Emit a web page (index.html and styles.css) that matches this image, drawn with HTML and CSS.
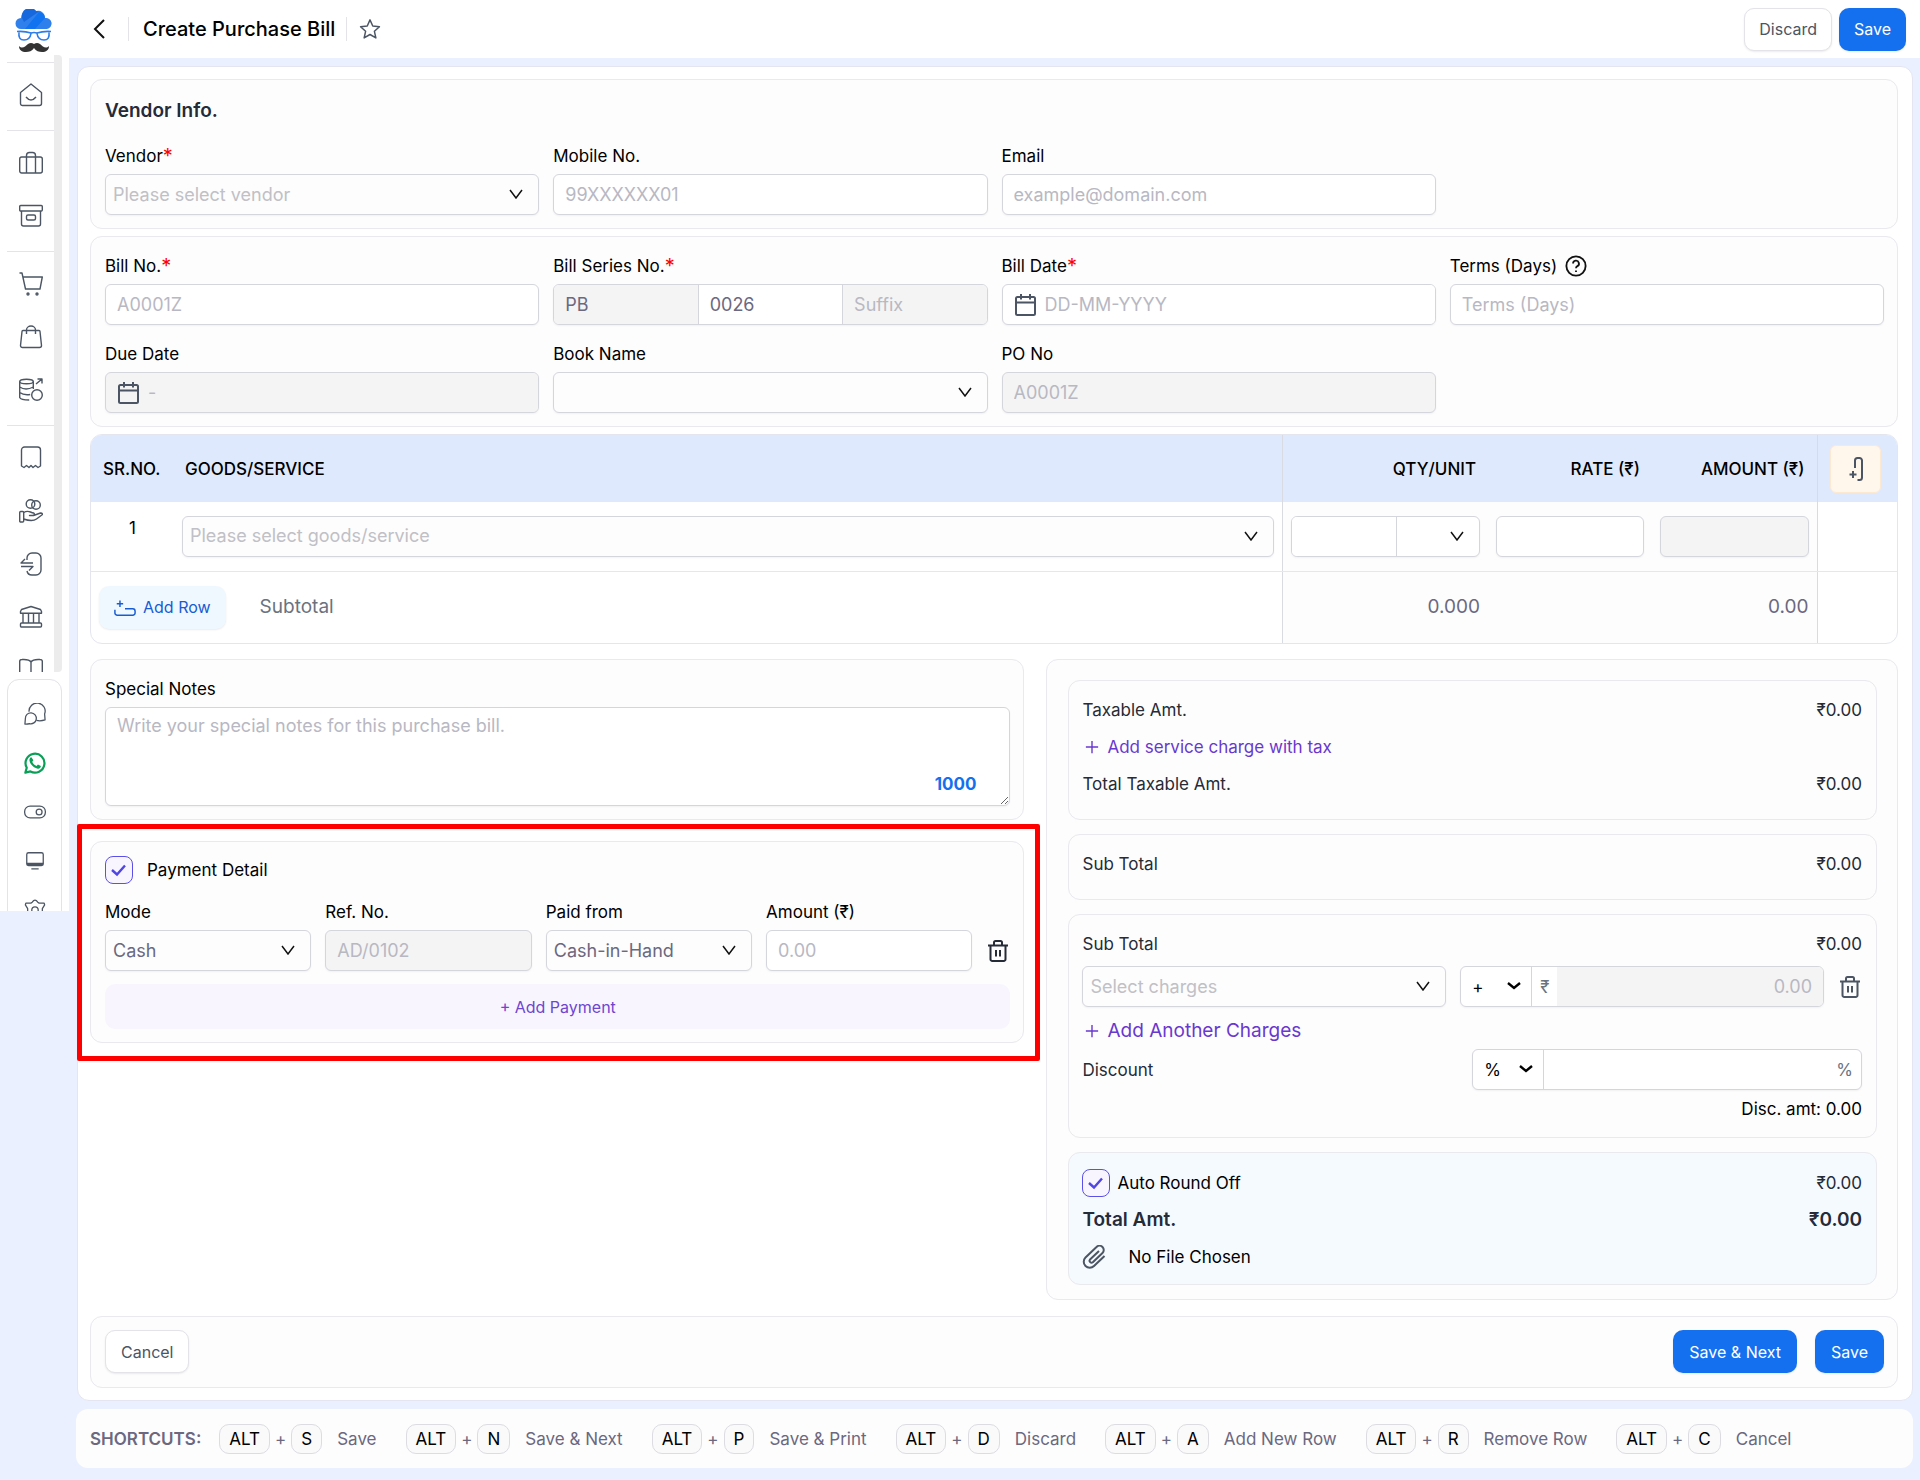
FILE: index.html
```
<!DOCTYPE html>
<html lang="en">
  <head>
    <meta charset="UTF-8" />
    <meta name="viewport" content="width=device-width, initial-scale=1.0" />
    <title>Create Purchase Bill</title>
    <link rel="stylesheet" href="styles.css" />
  </head>

  <body>
    <!-- shared icons -->
    <svg class="symbols" aria-hidden="true">
      <symbol id="icon-trash" viewBox="0 0 24 24">
        <path d="M2 6.500h20M8 6V3.500A1.500 1.500 0 0 1 9.500 2h5A1.500 1.500 0 0 1 16 3.500V6M4.500 6.500V20A1.800 1.800 0 0 0 6.300 22h11.400a1.800 1.800 0 0 0 1.800-2V6.500M10 11v6.500M14 11v6.500" />
      </symbol>
      <symbol id="icon-calendar" viewBox="0 0 24 24">
        <path d="M3.500 4h16A1.500 1.500 0 0 1 21 5.500v15a1.500 1.500 0 0 1-1.500 1.500h-16A1.500 1.500 0 0 1 2 20.500v-15A1.500 1.500 0 0 1 3.500 4zM2 9.500h19M7 1v5.500M16 1v5.500" />
      </symbol>
      <symbol id="icon-plus" viewBox="0 0 16 16">
        <path d="M8 1v14M1 8h14" />
      </symbol>
    </svg>

    <!-- sidebar -->
    <aside class="sidebar">
      <a href="#" class="logo" aria-label="Home page">
        <svg width="38" height="44" viewBox="0 0 38 44">
          <path fill="#2f80ed" d="M6 20a5.500 5.500 0 0 1 0-11 8 8 0 0 1 2-5 8 8 0 0 1 13-2 7 7 0 0 1 9 7 5.500 5.500 0 0 1 2 11z" />
          <path fill="#1668dc" d="M7 9a8 8 0 0 1 14-7l3 .5L9 13z" />
          <path fill="#1273f0" d="M10 20 24 3a7 7 0 0 1 6 6L20 20z" />
          <path fill="none" stroke="#2b7de9" stroke-width="1.600" d="M2 22.500q8-.5 14 1.500 3-1 6 0 6-2 14-1.500M4 23.500q-1 7.500 5 7.500 6 0 7-6.500M34 23.500q1 7.500-5 7.500-6 0-7-6.500" />
          <path fill="#333" d="M19 35q-3-2-6 0c-3 3-6 5-9 2 0 4 3 6 7 6 3 0 6-1 8-4 2 3 5 4 8 4 4 0 7-2 7-6-3 3-6 1-9-2q-3-2-6 0z" />
        </svg>
      </a>

      <nav class="menu">
        <div class="menu-group">
          <a href="#" aria-label="Dashboard"><svg class="icon" viewBox="0 0 24 24"><path d="M1.500 9.500 12 1l10.500 8.500v11a2 2 0 0 1-2 2h-17a2 2 0 0 1-2-2zM7 14q5 6 10 0" /></svg></a>
        </div>
        <div class="menu-group">
          <a href="#" aria-label="Contacts"><svg class="icon" viewBox="0 0 24 24"><rect x="0.700" y="6" width="22.600" height="16" rx="2" /><path d="M7.500 22V4.500A3 3 0 0 1 10.500 1.500h3a3 3 0 0 1 3 3V22" /></svg></a>
          <a href="#" aria-label="Products"><svg class="icon" viewBox="0 0 24 24"><rect x="0.700" y="1.500" width="22.600" height="5.500" rx="1" /><path d="M2.500 7v13a2 2 0 0 0 2 2h15a2 2 0 0 0 2-2V7" /><rect x="7.500" y="11" width="9" height="5" rx="1.500" /></svg></a>
        </div>
        <div class="menu-group">
          <a href="#" aria-label="Sales"><svg class="icon" viewBox="0 0 24 24"><path d="M0.500 1h2.500l3.500 16h14.500l2.300-12H4" /><circle cx="9" cy="22" r="1" /><circle cx="18" cy="22" r="1" /></svg></a>
          <a href="#" aria-label="Purchase"><svg class="icon" viewBox="0 0 24 24"><path d="M4 5.500h16a1 1 0 0 1 1 1l1.500 14a2 2 0 0 1-2 2h-17a2 2 0 0 1-2-2L3 6.500a1 1 0 0 1 1-1zM7.500 9V5a4.500 4 0 0 1 9 0v4" /></svg></a>
          <a href="#" aria-label="Quotation"><svg class="icon" viewBox="0 0 24 24"><ellipse cx="7.500" cy="3.500" rx="6.800" ry="2.300" /><path d="M.7 3.500v16q1 2.500 9.500 2.500M14.300 3.500V11M.7 9q6 4 13.600 0M.7 14.500q4 3 10.500 2M17 6l6-5M18.500 1H23v4.500" /><circle cx="18" cy="17" r="5.300" /></svg></a>
        </div>
        <div class="menu-group">
          <a href="#" aria-label="Expenses"><svg class="icon" viewBox="0 0 24 24"><path d="M2.500 20V4a3 3 0 0 1 3-3h13a3 3 0 0 1 3 3v16l-2.500 1.500-2.500-2-2.500 2-2-2-2 2-2.500-2-2.500 2z" /></svg></a>
          <a href="#" aria-label="Income"><svg class="icon" viewBox="0 0 24 24"><circle cx="11.500" cy="5" r="4.300" /><circle cx="17" cy="6" r="4.300" /><rect x="0.700" y="12.500" width="4" height="10.500" rx="1" /><path d="M4.700 13.500c5-3 6 0 10 .500q2 2-1 2.500H10.500h4l7-2.500q2 0 2 1.500l-6 4.500q-4 3-13 0" /></svg></a>
          <a href="#" aria-label="Payments"><svg class="icon" viewBox="0 0 24 24"><path d="M8 8V6a5 5 0 0 1 5-5h4a5 5 0 0 1 5 5v12a5 5 0 0 1-5 5h-4a5 5 0 0 1-5-4M14 11H2l4-4M2 14.500h12l-4 4" /></svg></a>
          <a href="#" aria-label="Bank"><svg class="icon" viewBox="0 0 24 24"><path d="m1.500 6.500 1-2L12 1.500l9.500 3 1 2v1.700h-21zM4 8.500V18M9.500 8.500V18M14.500 8.500V18M20 8.500V18" /><rect x="1.500" y="18" width="21" height="4" rx="1" /></svg></a>
          <a href="#" aria-label="Reports"><svg class="icon" viewBox="0 0 24 24"><path d="M12 22V4q-2-3-9-2.500-2.300 0-2.300 2V20h6.800q4 0 4.500 2 .5-2 4.500-2h6.800V3.500q0-2-2.300-2Q14 1 12 4" /></svg></a>
        </div>
      </nav>

      <nav class="menu-bottom">
        <a href="#" aria-label="Chat"><svg class="icon" viewBox="0 0 24 24"><path d="M5.500 9.500a8.800 8.800 0 1 1 17 2.500l.5 6.500q-5 1.500-9.500.5" /><path d="M1 23l.5-6a6 6 0 1 1 4.500 5.500q-2 .7-5 .5z" /></svg></a>
        <a href="#" aria-label="WhatsApp"><svg class="icon icon-whatsapp" viewBox="0 0 24 24"><path class="ring" d="M1.500 22.500 3 17.200A10.300 10.300 0 1 1 7 21.200z" /><path class="phone" d="M8 5.800c-1.600.4-2.300 2-2 3.700.7 4 4.800 8 9 8.700 1.800.2 3.400-1 3.400-2.900l-3.200-1.600-1.500 1.500c-2-.6-4-2.600-4.700-4.500L10.300 9z" /></svg></a>
        <a href="#" aria-label="Toggle"><svg class="icon" viewBox="0 0 24 24"><rect x="0.700" y="5.500" width="22.600" height="13" rx="6" /><circle cx="16.500" cy="12" r="3.200" /></svg></a>
        <a href="#" aria-label="Screen"><svg class="icon" viewBox="0 0 24 24"><rect x="3" y="3" width="18" height="14" rx="2" /><path d="M3 14.500h18M3 15.800h18M8 20.500h8" /></svg></a>
        <a href="#" aria-label="Settings"><svg class="icon" viewBox="0 0 24 24"><path d="M9 3.500Q12-1 15 3.500l1.500 1L22 4.500l.500 2-2.500 4v3l2.500 4-.500 2h-5.500L12 23l-4.500-3.500H2l-.500-2 2.500-4v-3L1.500 6.500l.500-2h5.500z" /><circle cx="12" cy="12" r="3.500" /></svg></a>
      </nav>
    </aside>

    <div class="page">
      <!-- header -->
      <header class="header">
        <button type="button" class="icon-btn" aria-label="Back">
          <svg width="24" height="24" viewBox="0 0 24 24"><path d="M16 3 7 12l9 9" fill="none" stroke="#111" stroke-width="2" /></svg>
        </button>
        <h1>Create Purchase Bill</h1>
        <button type="button" class="icon-btn star" aria-label="Add to favourites">
          <svg width="22" height="22" viewBox="0 0 24 24"><path d="m12 2 3 6.800 7.300.7-5.500 5 1.600 7.300L12 18l-6.400 3.800 1.600-7.300-5.500-5L9 8.800z" fill="none" stroke="#4b5563" stroke-width="1.600" stroke-linejoin="round" /></svg>
        </button>
        <div class="header-actions">
          <button type="button" class="btn btn-light">Discard</button>
          <button type="button" class="btn btn-primary">Save</button>
        </div>
      </header>

      <form class="panel">
        <!-- vendor -->
        <section class="card">
          <h2>Vendor Info.</h2>
          <div class="fields">
            <div class="field">
              <label for="vendor">Vendor<span class="req">*</span></label>
              <select id="vendor" class="control empty"><option>Please select vendor</option></select>
            </div>
            <div class="field">
              <label for="mobile">Mobile No.</label>
              <input type="text" id="mobile" class="control" placeholder="99XXXXXX01" />
            </div>
            <div class="field">
              <label for="email">Email</label>
              <input type="text" id="email" class="control" placeholder="example@domain.com" />
            </div>
          </div>
        </section>

        <!-- bill details -->
        <section class="card">
          <div class="fields">
            <div class="field">
              <label for="billNo">Bill No.<span class="req">*</span></label>
              <input type="text" id="billNo" class="control" placeholder="A0001Z" />
            </div>
            <div class="field">
              <label for="seriesNo">Bill Series No.<span class="req">*</span></label>
              <div class="group series">
                <input type="text" value="PB" aria-label="Prefix" disabled />
                <input type="text" id="seriesNo" value="0026" />
                <input type="text" placeholder="Suffix" aria-label="Suffix" disabled />
              </div>
            </div>
            <div class="field">
              <label for="billDate">Bill Date<span class="req">*</span></label>
              <div class="group date">
                <svg class="icon icon-bold"><use href="#icon-calendar" /></svg>
                <input type="text" id="billDate" placeholder="DD-MM-YYYY" />
              </div>
            </div>
            <div class="field">
              <label for="terms">Terms (Days)
                <svg class="help" viewBox="0 0 24 24"><circle cx="12" cy="12" r="10.500" /><path d="M8.800 9.300a3.200 3.200 0 1 1 4.700 2.900q-1.500.8-1.500 2.300M12 16.800v1.700" /></svg>
              </label>
              <input type="text" id="terms" class="control" placeholder="Terms (Days)" />
            </div>
            <div class="field">
              <label for="dueDate">Due Date</label>
              <div class="group date disabled">
                <svg class="icon icon-bold"><use href="#icon-calendar" /></svg>
                <input type="text" id="dueDate" placeholder="-" disabled />
              </div>
            </div>
            <div class="field">
              <label for="bookName">Book Name</label>
              <select id="bookName" class="control"><option></option></select>
            </div>
            <div class="field">
              <label for="poNo">PO No</label>
              <input type="text" id="poNo" class="control" placeholder="A0001Z" disabled />
            </div>
          </div>
        </section>

        <!-- items -->
        <div class="table-wrap">
          <table class="items">
            <colgroup>
              <col class="col-sr" />
              <col />
              <col class="col-qty" />
              <col class="col-rate" />
              <col class="col-amount" />
              <col class="col-action" />
            </colgroup>
            <thead>
              <tr>
                <th class="sr">SR.NO.</th>
                <th class="goods">GOODS/SERVICE</th>
                <th class="num line">QTY/UNIT</th>
                <th class="num">RATE (₹)</th>
                <th class="num">AMOUNT (₹)</th>
                <th class="line action">
                  <button type="button" class="btn-column" aria-label="Add column">
                    <svg class="icon icon-bold" viewBox="0 0 24 24"><path d="M12 11V3.500A2.500 2.500 0 0 1 14.500 1h2A2.500 2.500 0 0 1 19 3.500v17a2.500 2.500 0 0 1-2.500 2.500H14.500M6.500 17.500h7M10 14v7" /></svg>
                  </button>
                </th>
              </tr>
            </thead>
            <tbody>
              <tr>
                <td class="sr-value">1</td>
                <td>
                  <select class="control empty" aria-label="Goods or service"><option>Please select goods/service</option></select>
                </td>
                <td class="line shade">
                  <div class="group qty">
                    <input type="text" aria-label="Quantity" />
                    <select aria-label="Unit"><option></option></select>
                  </div>
                </td>
                <td class="shade"><input type="text" class="control" aria-label="Rate" /></td>
                <td class="shade"><input type="text" class="control" aria-label="Amount" disabled /></td>
                <td class="line"></td>
              </tr>
            </tbody>
            <tfoot>
              <tr>
                <td colspan="2">
                  <div class="subtotal">
                    <button type="button" class="btn btn-row">
                      <svg width="22" height="22" viewBox="0 0 24 24"><path d="M1 15v3.500A2.500 2.500 0 0 0 3.500 21h17a2.500 2.500 0 0 0 2.500-2.500v-2a2.500 2.500 0 0 0-2.500-2.500H12M3 8.500h7M6.500 5v7" /></svg>
                      Add Row
                    </button>
                    <span>Subtotal</span>
                  </div>
                </td>
                <td class="total line shade">0.000</td>
                <td class="shade"></td>
                <td class="total shade">0.00</td>
                <td class="line"></td>
              </tr>
            </tfoot>
          </table>
        </div>

        <div class="columns">
          <div class="left">
            <section class="card notes">
              <label for="notes">Special Notes</label>
              <div class="notes-box">
                <textarea id="notes" class="control" placeholder="Write your special notes for this purchase bill."></textarea>
                <span class="counter">1000</span>
              </div>
            </section>

            <section class="card payment">
              <label class="check">
                <input type="checkbox" checked />
                Payment Detail
              </label>
              <div class="payment-row">
                <div class="field">
                  <label for="mode">Mode</label>
                  <select id="mode" class="control"><option>Cash</option></select>
                </div>
                <div class="field">
                  <label for="refNo">Ref. No.</label>
                  <input type="text" id="refNo" class="control" placeholder="AD/0102" disabled />
                </div>
                <div class="field">
                  <label for="paidFrom">Paid from</label>
                  <select id="paidFrom" class="control"><option>Cash-in-Hand</option></select>
                </div>
                <div class="field">
                  <label for="payAmount">Amount (₹)</label>
                  <input type="text" id="payAmount" class="control" placeholder="0.00" />
                </div>
                <button type="button" class="icon-btn trash" aria-label="Delete payment">
                  <svg class="icon icon-bold"><use href="#icon-trash" /></svg>
                </button>
              </div>
              <button type="button" class="btn-payment">+ Add Payment</button>
            </section>
          </div>

          <div class="card summary">
            <section class="card box">
              <div class="row"><span>Taxable Amt.</span><span>₹0.00</span></div>
              <div class="row">
                <a href="#" class="add-link"><svg><use href="#icon-plus" /></svg>Add service charge with tax</a>
              </div>
              <div class="row"><span>Total Taxable Amt.</span><span>₹0.00</span></div>
            </section>

            <section class="card box">
              <div class="row"><span>Sub Total</span><span>₹0.00</span></div>
            </section>

            <section class="card box charges">
              <div class="row"><span>Sub Total</span><span>₹0.00</span></div>
              <div class="charge-row">
                <select class="control empty" aria-label="Charges"><option>Select charges</option></select>
                <div class="group charge-amount">
                  <select class="sign" aria-label="Sign"><option>+</option></select>
                  <span class="unit">₹</span>
                  <input type="text" placeholder="0.00" aria-label="Charge amount" disabled />
                </div>
                <button type="button" class="icon-btn" aria-label="Delete charge">
                  <svg class="icon icon-bold"><use href="#icon-trash" /></svg>
                </button>
              </div>
              <div class="row">
                <a href="#" class="add-link add-link-large"><svg><use href="#icon-plus" /></svg>Add Another Charges</a>
              </div>
              <div class="discount-row">
                <label for="discount">Discount</label>
                <div class="group discount">
                  <select class="sign" aria-label="Discount type"><option>%</option></select>
                  <input type="text" id="discount" />
                  <span class="unit">%</span>
                </div>
              </div>
              <div class="row disc-amt">Disc. amt: 0.00</div>
            </section>

            <section class="card box final">
              <div class="row">
                <label class="check"><input type="checkbox" checked />Auto Round Off</label>
                <span>₹0.00</span>
              </div>
              <div class="row grand"><span>Total Amt.</span><span>₹0.00</span></div>
              <div class="row file">
                <svg class="icon icon-bold" viewBox="0 0 24 24"><path d="m17 6-9 8.500a2 2 0 0 0 2.800 2.800L20.500 8a4.200 4.200 0 0 0-6-6L3.500 12.500a6 6 0 0 0 8.500 8.500l10.500-10" /></svg>
                <span>No File Chosen</span>
              </div>
            </section>
          </div>
        </div>

        <div class="card actions">
          <button type="button" class="btn btn-light">Cancel</button>
          <div>
            <button type="button" class="btn btn-primary">Save &amp; Next</button>
            <button type="submit" class="btn btn-primary">Save</button>
          </div>
        </div>
      </form>

      <!-- shortcuts -->
      <footer class="shortcuts">
        <strong>SHORTCUTS:</strong>
        <div class="shortcut"><kbd>ALT</kbd>+<kbd>S</kbd><span>Save</span></div>
        <div class="shortcut"><kbd>ALT</kbd>+<kbd>N</kbd><span>Save &amp; Next</span></div>
        <div class="shortcut"><kbd>ALT</kbd>+<kbd>P</kbd><span>Save &amp; Print</span></div>
        <div class="shortcut"><kbd>ALT</kbd>+<kbd>D</kbd><span>Discard</span></div>
        <div class="shortcut"><kbd>ALT</kbd>+<kbd>A</kbd><span>Add New Row</span></div>
        <div class="shortcut"><kbd>ALT</kbd>+<kbd>R</kbd><span>Remove Row</span></div>
        <div class="shortcut"><kbd>ALT</kbd>+<kbd>C</kbd><span>Cancel</span></div>
      </footer>
    </div>
  </body>
</html>
```

FILE: styles.css
```
* {
  box-sizing: border-box;
}

body {
  margin: 0;
  display: flex;
  align-items: flex-start;
  font-family: Inter, "Liberation Sans", sans-serif;
  font-size: 17px;
  line-height: 24px;
  color: #000;
  background-color: #eaf0ff;
}

h1,
h2 {
  margin: 0;
}

a {
  text-decoration: none;
}

input,
select,
textarea,
button {
  font: inherit;
  margin: 0;
}

button {
  cursor: pointer;
}

.symbols {
  position: absolute;
  width: 0;
  height: 0;
}

.icon {
  display: block;
  width: 24px;
  height: 24px;
  fill: none;
  stroke: #4b5563;
  stroke-width: 1.4;
  stroke-linejoin: round;
}

.icon-bold {
  stroke-width: 2;
}

/* sidebar */

.sidebar {
  flex: none;
  width: 69px;
  height: 911px;
  overflow: hidden;
  background-color: #fff;
}

.logo {
  display: block;
  height: 55px;
  padding: 9px 0 0 15px;
}

.menu {
  height: 617px;
  margin-right: 7px;
  padding-left: 7px;
  overflow: hidden;
  border-right: 8px solid #ececec;
  border-radius: 4px;
}

.menu-group {
  padding: 5px 0 9px;
  border-top: 1px solid #e3e3e8;
}

.menu-group:first-child {
  margin-top: 7px;
}

.menu-group a {
  display: flex;
  align-items: center;
  justify-content: center;
  height: 53px;
}

.menu-bottom {
  height: 260px;
  margin: 7px 7px 0;
  padding-top: 9px;
  border: 1px solid #e3e3e8;
  border-radius: 12px;
}

.menu-bottom a {
  display: flex;
  align-items: center;
  justify-content: center;
  height: 49px;
}

.menu-bottom .icon {
  width: 22px;
  height: 22px;
}

.icon-whatsapp .ring {
  stroke: #0a9f56;
  stroke-width: 2.4;
}

.icon-whatsapp .phone {
  fill: #0a9f56;
  stroke: none;
}

/* header */

.page {
  flex: 1;
  min-width: 0;
}

.header {
  display: flex;
  align-items: center;
  height: 58px;
  padding: 0 14px 0 19px;
  background-color: #fff;
}

.header h1 {
  margin-left: 16px;
  padding: 0 11px 0 14px;
  border-left: 1px solid #e3e3e8;
  border-right: 1px solid #e3e3e8;
  font-size: 20px;
  font-weight: 500;
}

.icon-btn {
  display: flex;
  padding: 0;
  border: none;
  background: none;
}

.star {
  margin-left: 12px;
}

.header-actions {
  display: flex;
  gap: 7px;
  margin-left: auto;
}

.btn {
  height: 43px;
  padding: 0 14px;
  border: 1px solid transparent;
  border-radius: 10px;
  box-shadow: 0 1px 2px rgba(0, 0, 0, 0.08);
  font-size: 16px;
}

.btn-light {
  border-color: #e3e3e8;
  background-color: #fff;
  color: #4b5563;
}

.btn-primary {
  background-color: #1570ef;
  color: #fff;
}

/* cards */

.panel {
  display: flex;
  flex-direction: column;
  gap: 7px;
  margin: 8px 7px 8px 8px;
  padding: 12px 14px 12px 12px;
  border: 1px solid #e3e6f0;
  border-radius: 12px;
  background-color: #fff;
}

.card {
  padding: 17px 13px 13px 14px;
  border: 1px solid #e9e9ee;
  border-radius: 12px;
  background-color: #fdfdfd;
}

.card h2 {
  margin-bottom: 20px;
  font-size: 19px;
  font-weight: 600;
  line-height: 27px;
  color: #252b37;
}

.fields {
  display: grid;
  grid-template-columns: repeat(4, 1fr);
  gap: 17px 14px;
}

.field {
  display: flex;
  flex-direction: column;
  gap: 6px;
  min-width: 0;
}

.field label {
  display: flex;
  align-items: center;
  height: 24px;
}

.req {
  color: #f00;
  font-size: 20px;
}

.help {
  width: 22px;
  height: 22px;
  margin-left: 8px;
  fill: none;
  stroke: #111;
  stroke-width: 2;
}

.control,
.group {
  width: 100%;
  height: 41px;
  border: 1px solid #d5d5dd;
  border-radius: 6px;
  background-color: #fff;
  box-shadow: 0 1px 2px rgba(0, 0, 0, 0.05);
}

.control,
.group input,
.group select {
  padding: 0 11px;
  font-size: 18px;
  color: #6b6880;
}

::placeholder {
  color: #b8b8c3;
  opacity: 1;
}

.control:disabled,
.group input:disabled,
.disabled {
  background-color: #f4f4f4;
}

select {
  appearance: none;
  background: transparent url("data:image/svg+xml,%3Csvg xmlns='http://www.w3.org/2000/svg' width='14' height='11' fill='none' stroke='%23111' stroke-width='1.500'%3E%3Cpath d='M1 1l6 8 6-8'/%3E%3C/svg%3E") no-repeat right 15px center;
}

select.control {
  padding-left: 7px;
  background-color: #fdfdfd;
}

select.empty {
  color: #c0c0c6;
}

.group {
  display: flex;
  align-items: center;
  overflow: hidden;
}

.group input,
.group select {
  flex: 1;
  min-width: 0;
  height: 100%;
  border: none;
}

.series input + input {
  border-left: 1px solid #d5d5dd;
}

.date {
  padding-left: 11px;
}

.date input {
  padding-left: 7px;
}

/* items table */

.table-wrap {
  overflow: hidden;
  border: 1px solid #e3e6ee;
  border-radius: 12px;
}

.items {
  width: 100%;
  table-layout: fixed;
  border-collapse: collapse;
}

.col-sr {
  width: 83px;
}

.col-qty {
  width: 206px;
}

.col-rate {
  width: 164px;
}

.col-amount {
  width: 165px;
}

.col-action {
  width: 80px;
}

.items th {
  height: 67px;
  padding: 0 12px;
  background-color: #dfe9fd;
  font-weight: 500;
  text-align: left;
}

.items th.goods {
  padding-left: 11px;
}

.items th.num {
  text-align: right;
}

.items .line {
  border-left: 1px solid #d9dbe2;
}

.items td {
  padding: 0 8px;
}

.items tbody td {
  height: 69px;
  border-bottom: 1px solid #e6e6ec;
}

.items tfoot td {
  height: 72px;
}

.items .sr-value {
  padding-bottom: 16px;
  text-align: center;
}

.shade {
  background-color: #fdfdfd;
}

.items .qty select {
  flex: 0 0 83px;
  border-left: 1px solid #d5d5dd;
}

.items .total {
  font-size: 19px;
  color: #6b6880;
  text-align: right;
}

.btn-column {
  display: flex;
  align-items: center;
  justify-content: center;
  width: 51px;
  height: 48px;
  border: 1px solid #fde8d2;
  border-radius: 6px;
  background-color: #fff6ec;
}

.subtotal {
  display: flex;
  align-items: center;
  gap: 34px;
  font-size: 19px;
  color: #6b7280;
}

.btn-row {
  display: flex;
  align-items: center;
  gap: 7px;
  background-color: #f0f8ff;
  color: #175cd3;
}

.btn-row svg {
  fill: none;
  stroke: #175cd3;
  stroke-width: 1.6;
}

/* notes and payment */

.columns {
  display: grid;
  grid-template-columns: 935fr 852fr;
  align-items: start;
  gap: 22px;
  margin: 8px 0 9px;
}

.left {
  display: flex;
  flex-direction: column;
  gap: 21px;
}

.notes-box {
  position: relative;
  margin-top: 6px;
}

.notes label {
  display: block;
}

.notes textarea {
  display: block;
  height: 99px;
  padding: 6px 11px;
}

.counter {
  position: absolute;
  right: 34px;
  bottom: 10px;
  color: #1570ef;
  font-weight: 700;
}

/* red frame round the payment block */
.payment {
  position: relative;
  padding-top: 14px;
}

.payment::after {
  content: "";
  position: absolute;
  inset: -18px -17px -19px -14px;
  border: 5px solid #f00;
  border-radius: 2px;
  pointer-events: none;
}

.check {
  display: flex;
  align-items: center;
  gap: 14px;
}

.check input {
  appearance: none;
  width: 28px;
  height: 28px;
  border: 1px solid #5b50e8;
  border-radius: 8px;
  background-color: #f8f5ff;
}

.check input:checked {
  background-image: url("data:image/svg+xml,%3Csvg xmlns='http://www.w3.org/2000/svg' width='16' height='14' fill='none' stroke='%234f46e5' stroke-width='2.400'%3E%3Cpath d='M1 7l5 4.500 8-9'/%3E%3C/svg%3E");
  background-repeat: no-repeat;
  background-position: center;
}

.payment-row {
  display: grid;
  grid-template-columns: repeat(4, 1fr) 24px;
  align-items: end;
  gap: 14px;
  margin: 16px 0 13px;
}

.trash {
  align-items: center;
  height: 41px;
}

.trash .icon {
  stroke: #252b37;
}

.btn-payment {
  width: 100%;
  height: 45px;
  border: none;
  border-radius: 10px;
  background-color: #f8f5ff;
  color: #6e46d0;
  font-size: 16px;
}

/* summary */

.summary {
  display: flex;
  flex-direction: column;
  gap: 14px;
  padding: 20px 20px 14px 21px;
}

.box {
  padding: 10px 14px 17px 13px;
}

.row {
  display: flex;
  align-items: center;
  justify-content: space-between;
  height: 37px;
  color: #252b37;
}

.add-link {
  display: flex;
  align-items: center;
  gap: 8px;
  color: #6938cf;
}

.add-link svg {
  width: 14px;
  height: 14px;
  margin-left: 3px;
  stroke: currentColor;
  stroke-width: 1.6;
}

.add-link-large {
  font-size: 19px;
}

.charges {
  padding-bottom: 10px;
}

.charge-row {
  display: grid;
  grid-template-columns: 1fr 1fr 24px;
  align-items: center;
  gap: 14px;
  margin: 4px 0 5px;
}

.group .sign {
  flex: 0 0 71px;
  padding-left: 11px;
  border-right: 1px solid #d5d5dd;
  background-image: url("data:image/svg+xml,%3Csvg xmlns='http://www.w3.org/2000/svg' width='14' height='9' fill='none' stroke='%23000' stroke-width='2.400'%3E%3Cpath d='M1 1l6 5 6-5'/%3E%3C/svg%3E");
  background-position: right 10px center;
  color: #000;
  font-size: 17px;
}

.unit {
  padding: 0 8px;
  color: #6b7280;
}

.charge-amount input {
  text-align: right;
}

.discount-row {
  display: grid;
  grid-template-columns: 1fr 1fr;
  align-items: center;
  color: #252b37;
}

.disc-amt {
  justify-content: flex-end;
  color: #000;
}

.final {
  padding: 11px 14px 9px 13px;
  background-color: #f5faff;
}

.final .check {
  gap: 7px;
  color: #000;
}

.grand {
  font-size: 19px;
  font-weight: 600;
}

.file {
  justify-content: flex-start;
  gap: 22px;
  color: #000;
}

/* bottom bar */

.actions {
  display: flex;
  align-items: center;
  justify-content: space-between;
  padding-top: 13px;
  padding-bottom: 14px;
}

.actions .btn {
  padding: 0 15px;
}

.actions div {
  display: flex;
  gap: 18px;
}

.shortcuts {
  display: flex;
  align-items: center;
  flex-wrap: wrap;
  gap: 12px 29px;
  min-height: 59px;
  margin: 0 7px 14px;
  padding: 0 14px;
  border-radius: 12px;
  background-color: #fdfdfd;
  color: #6b6880;
}

.shortcuts strong {
  margin-right: -11px;
  font-weight: 600;
}

.shortcut {
  display: flex;
  align-items: center;
  gap: 5px;
}

.shortcut span {
  margin-left: 10px;
}

kbd {
  padding: 2px 9px;
  border: 1px solid #dcdce2;
  border-radius: 10px;
  background-color: #fafafa;
  color: #000;
  font-family: inherit;
  font-size: 17px;
}
```
